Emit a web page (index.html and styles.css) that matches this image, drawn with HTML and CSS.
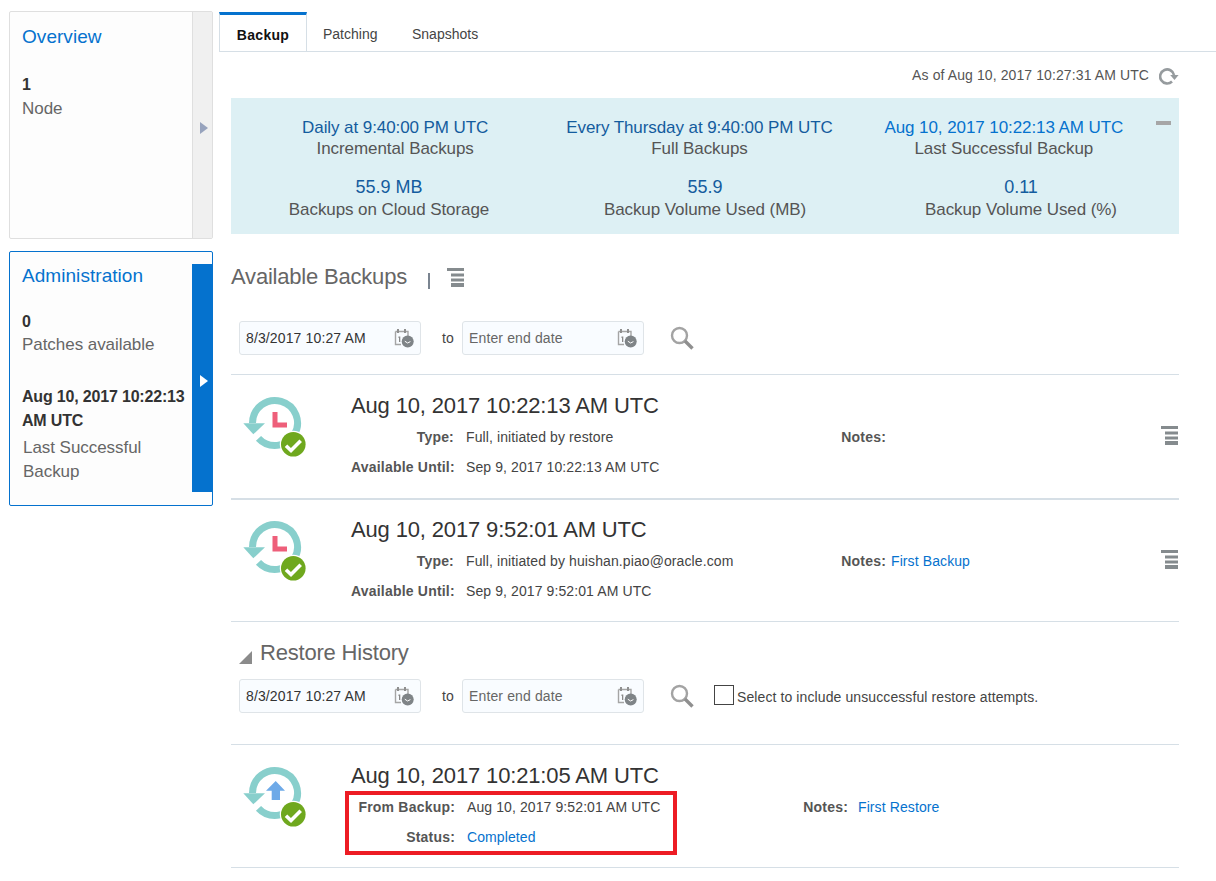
FILE: index.html
```html
<!DOCTYPE html>
<html lang="en">
<head>
<meta charset="utf-8">
<title>Backup</title>
<link rel="stylesheet" href="styles.css">
</head>
<body>
<svg class="defs" width="0" height="0" aria-hidden="true">
  <symbol id="i-base" viewBox="0 0 70 66">
    <path d="M12.5 28A22.5 22.5 0 1 1 18.5 43.3" fill="none" stroke="#88cfcc" stroke-width="7"/>
    <path d="M3.3 28.3H25L13.3 39.3Z" fill="#88cfcc"/>
    <circle cx="53.3" cy="49.3" r="13.5" fill="#fff"/>
    <circle cx="53.3" cy="49.3" r="12.3" fill="#6fa81e"/>
    <path d="M46 50.7L51 55.5 60.7 45.7" fill="none" stroke="#fff" stroke-width="3.6"/>
  </symbol>
  <symbol id="i-cal" viewBox="0 0 20 20">
    <path d="M1.5 3.5H14V8M1.5 3.5V16.5H7" fill="none" stroke="#a5a5a5" stroke-width="1.4"/>
    <path d="M4 1V5M11 1V5" stroke="#8f8f8f" stroke-width="2"/>
    <path d="M4.5 8.5H6.3V14H5V10H4.5Z" fill="#888"/>
    <circle cx="13.7" cy="13.5" r="6" fill="#7f8487"/>
    <path d="M10.8 13.2L13.6 15 16.4 13.6" fill="none" stroke="#fff" stroke-width="1"/>
  </symbol>
  <symbol id="i-search" viewBox="0 0 24 24">
    <circle cx="9.5" cy="9.5" r="7.5" fill="none" stroke="#a3a3a3" stroke-width="2.4"/>
    <path d="M15 15L22.5 22.5" stroke="#8f8f8f" stroke-width="3.4"/>
  </symbol>
  <symbol id="i-stack" viewBox="0 0 17 19">
    <rect x="0" y="0" width="17" height="3" fill="#858b8e"/>
    <rect x="4" y="5.5" width="13" height="3" fill="#858b8e"/>
    <rect x="4" y="10.5" width="13" height="3" fill="#858b8e"/>
    <rect x="4" y="15" width="13" height="4" fill="#858b8e"/>
  </symbol>
</svg>

<div class="page">
  <aside class="sidebar">
    <section class="card card-overview">
      <div class="card-body">
        <h2 class="card-title">Overview</h2>
        <div class="metric-value first">1</div>
        <div class="metric-label">Node</div>
      </div>
      <div class="handle"><span class="arrow"></span></div>
    </section>
    <section class="card card-admin">
      <div class="card-body">
        <h2 class="card-title">Administration</h2>
        <div class="metric-value first-admin">0</div>
        <div class="metric-label">Patches available</div>
        <div class="metric-value second">Aug 10, 2017 10:22:13 AM UTC</div>
        <div class="metric-label last">Last Successful Backup</div>
      </div>
      <div class="handle handle-active"><span class="arrow"></span></div>
    </section>
  </aside>

  <main class="main">
    <nav class="tabs">
      <a class="tab active">Backup</a>
      <a class="tab">Patching</a>
      <a class="tab">Snapshots</a>
    </nav>
    <div class="content">
      <div class="asof">
        <span>As of Aug 10, 2017 10:27:31 AM UTC</span>
        <svg class="refresh" width="20" height="18" viewBox="0 0 20 18"><path d="M13 13.5A7 7 0 1 1 15 7" fill="none" stroke="#969b9e" stroke-width="2.6"/><path d="M11.2 7H19.6L15.5 12Z" fill="#969b9e"/></svg>
      </div>

      <section class="summary">
        <span class="collapse"></span>
        <div class="summary-row row-top">
          <div class="stat"><div class="stat-value">Daily at 9:40:00 PM UTC</div><div class="stat-label">Incremental Backups</div></div>
          <div class="stat"><div class="stat-value">Every Thursday at 9:40:00 PM UTC</div><div class="stat-label">Full Backups</div></div>
          <div class="stat"><div class="stat-value link">Aug 10, 2017 10:22:13 AM UTC</div><div class="stat-label">Last Successful Backup</div></div>
        </div>
        <div class="summary-row row-bottom">
          <div class="stat"><div class="stat-value">55.9 MB</div><div class="stat-label">Backups on Cloud Storage</div></div>
          <div class="stat"><div class="stat-value">55.9</div><div class="stat-label">Backup Volume Used (MB)</div></div>
          <div class="stat"><div class="stat-value">0.11</div><div class="stat-label">Backup Volume Used (%)</div></div>
        </div>
      </section>

      <div class="section-head">
        <h2 class="section-title">Available Backups</h2>
        <span class="sep"></span>
        <svg class="stack-head" width="17" height="19"><use href="#i-stack"/></svg>
      </div>

      <div class="filters filters-backups">
        <div class="date-input"><span class="date-text">8/3/2017 10:27 AM</span><svg width="20" height="20"><use href="#i-cal"/></svg></div>
        <span class="to">to</span>
        <div class="date-input"><span class="date-text placeholder">Enter end date</span><svg width="20" height="20"><use href="#i-cal"/></svg></div>
        <svg class="search" width="24" height="24"><use href="#i-search"/></svg>
      </div>

      <article class="record first-record">
        <svg class="record-icon" width="70" height="66"><use href="#i-base"/><path d="M35 17V30H47" fill="none" stroke="#ee5f7a" stroke-width="5"/></svg>
        <div class="record-main">
          <h3 class="record-title">Aug 10, 2017 10:22:13 AM UTC</h3>
          <div class="details">
            <span class="k">Type:</span><span class="v">Full, initiated by restore</span>
            <span class="k notes">Notes:</span><span class="v"></span>
            <span class="k">Available Until:</span><span class="v">Sep 9, 2017 10:22:13 AM UTC</span>
          </div>
        </div>
        <svg class="record-action" width="17" height="19"><use href="#i-stack"/></svg>
      </article>

      <article class="record">
        <svg class="record-icon" width="70" height="66"><use href="#i-base"/><path d="M35 17V30H47" fill="none" stroke="#ee5f7a" stroke-width="5"/></svg>
        <div class="record-main">
          <h3 class="record-title">Aug 10, 2017 9:52:01 AM UTC</h3>
          <div class="details">
            <span class="k">Type:</span><span class="v">Full, initiated by huishan.piao@oracle.com</span>
            <span class="k notes">Notes:</span><a class="v link">First Backup</a>
            <span class="k">Available Until:</span><span class="v">Sep 9, 2017 9:52:01 AM UTC</span>
          </div>
        </div>
        <svg class="record-action" width="17" height="19"><use href="#i-stack"/></svg>
      </article>

      <div class="restore-head">
        <span class="disclosure"></span>
        <h2 class="section-title">Restore History</h2>
      </div>

      <div class="filters filters-restore">
        <div class="date-input"><span class="date-text">8/3/2017 10:27 AM</span><svg width="20" height="20"><use href="#i-cal"/></svg></div>
        <span class="to">to</span>
        <div class="date-input"><span class="date-text placeholder">Enter end date</span><svg width="20" height="20"><use href="#i-cal"/></svg></div>
        <svg class="search" width="24" height="24"><use href="#i-search"/></svg>
        <span class="checkbox"></span>
        <span class="check-label">Select to include unsuccessful restore attempts.</span>
      </div>

      <article class="record restore-record">
        <svg class="record-icon" width="70" height="66"><use href="#i-base"/><path d="M26 25.7H31.7V35H40V25.7H45L35.7 16Z" fill="#6eaae8"/></svg>
        <div class="record-main">
          <h3 class="record-title">Aug 10, 2017 10:21:05 AM UTC</h3>
          <div class="details details-restore">
            <span class="k">From Backup:</span><span class="v">Aug 10, 2017 9:52:01 AM UTC</span>
            <span class="k notes">Notes:</span><a class="v link">First Restore</a>
            <span class="k">Status:</span><a class="v link">Completed</a>
          </div>
        </div>
        <div class="highlight"></div>
      </article>
    </div>
  </main>
</div>
</body>
</html>
```
FILE: styles.css
```css
* { box-sizing: border-box; }
html, body { margin: 0; padding: 0; background: #fff; }
body { font-family: "Liberation Sans", Arial, sans-serif; color: #333; height: 881px; overflow: hidden; }
.defs { position: absolute; }
h2, h3 { margin: 0; font-weight: normal; }
.page { display: flex; align-items: flex-start; }

.sidebar { width: 204px; margin: 11px 0 0 9px; flex: none; display: flex; flex-direction: column; gap: 12px; }
.card { display: flex; align-items: flex-start; width: 204px; background: #fdfdfd; border: 1px solid #dfdfdf; border-radius: 2px; }
.card-overview { height: 228px; align-items: stretch; }
.card-admin { height: 255px; border-color: #0572ce; }
.card-body { flex: 1; align-self: flex-start; padding-left: 12px; }
.card-title { color: #0572ce; font-size: 19px; line-height: 24px; letter-spacing: 0.05px; }
.card-overview .card-title { margin-top: 13px; }
.card-admin .card-title { margin-top: 12px; }
.metric-value { font-size: 16px; font-weight: bold; line-height: 24px; color: #333; letter-spacing: -0.18px; }
.metric-label { font-size: 17px; line-height: 24px; color: #666; letter-spacing: -0.05px; }
.metric-value.first { margin-top: 24px; }
.metric-value.first-admin { margin-top: 22px; line-height: 23px; }
.metric-value.second { margin-top: 28px; width: 170px; }
.metric-label.last { margin: 3px 0 0 1px; width: 150px; }
.handle { flex: none; width: 20px; background: #f0f0f0; border-left: 1px solid #dfdfdf; display: flex; align-items: center; justify-content: center; }
.handle-active { height: 228px; margin-top: 12px; background: #0572ce; border-left-color: #0572ce; }
.arrow { width: 0; height: 0; margin: 6px 0 0 2px; border-left: 8px solid #97a3bd; border-top: 6px solid transparent; border-bottom: 6px solid transparent; }
.handle-active .arrow { border-left-color: #fff; }

.main { flex: 1; min-width: 0; margin-left: 6px; }
.tabs { display: flex; height: 40px; margin-top: 12px; border-bottom: 1px solid #d6dfe6; font-size: 14px; color: #444; }
.tab { height: 40px; line-height: 44px; padding: 0 17px; }
.tab.active { width: 88px; text-align: center; padding: 0; font-weight: bold; color: #111; letter-spacing: 0.3px; border: 1px solid #d6dfe6; border-top: 3px solid #0572ce; line-height: 40px; background: #fff; }
.tab.active + .tab { padding-left: 16px; padding-right: 17.5px; }

.content { width: 948px; margin-left: 12px; }
.asof { height: 46px; display: flex; align-items: center; justify-content: flex-end; font-size: 14px; letter-spacing: 0.1px; color: #555; }
.refresh { margin-left: 10px; margin-top: 4px; }

.summary { position: relative; height: 136px; background: #ddf0f4; padding-top: 19px; font-size: 17px; letter-spacing: -0.08px; }
.collapse { position: absolute; left: 925px; top: 23px; width: 15px; height: 4px; background: #a6a6a6; }
.summary-row { display: grid; grid-template-columns: repeat(3, 1fr); text-align: center; }
.row-top { padding: 0 23px 0 12px; }
.row-bottom { margin-top: 18px; }
.row-bottom .stat-value { font-size: 18px; letter-spacing: 0; }
.row-bottom .stat-label { margin-top: 1px; }
.stat-value { line-height: 21px; color: #145c9e; }
.stat-value.link { color: #0572ce; }
.stat-label { line-height: 21px; color: #555; }

.section-head { display: flex; align-items: center; height: 30px; margin-top: 28px; }
.section-title { font-size: 22px; line-height: 30px; color: #666; letter-spacing: -0.2px; }
.sep { width: 2px; height: 16px; background: #7a8490; margin: 8px 0 0 21px; }
.stack-head { margin-left: 17px; }

.filters { display: flex; align-items: center; padding-left: 8px; }
.filters-backups { height: 34px; margin-top: 29px; }
.filters-restore { height: 34px; margin-top: 12px; }
.date-input { width: 182px; height: 34px; display: flex; align-items: center; justify-content: space-between; padding: 0 6px; background: #f9fcff; border: 1px solid #dfe4e8; border-radius: 3px; font-size: 14px; letter-spacing: 0.13px; color: #333; }
.date-text { line-height: 20px; }
.placeholder { color: #666; }
.to { width: 41px; padding-left: 21px; font-size: 14px; color: #444; }
.search { margin-left: 26px; }
.checkbox { width: 20px; height: 20px; margin: -3px 0 0 20px; border: 1px solid #444; background: #fff; }
.check-label { margin: 2px 0 0 3px; font-size: 14px; letter-spacing: 0.1px; color: #444; }

.record { position: relative; display: flex; align-items: flex-start; padding: 0 1px 0 9px; border-top: 1px solid #d6dfe6; height: 123px; }
.first-record { margin-top: 19px; height: 124px; }
.record + .record { border-top: 2px solid #d6dfe6; height: 123px; }
.record + .record .record-icon { margin-top: 19px; }
.record + .record .record-main { padding-top: 17px; }
.record + .record .record-action { margin-top: 50px; }
.record-icon { flex: none; margin-top: 20px; }
.record-main { margin-left: 41px; flex: 1; padding-top: 18px; }
.record-title { font-size: 22px; line-height: 26px; color: #333; letter-spacing: -0.15px; }
.details { display: grid; grid-template-columns: 115px 375px 50px 1fr; grid-auto-rows: 30px; align-items: center; margin-top: 3px; font-size: 14px; letter-spacing: 0.1px; }
.k { font-weight: bold; color: #555; text-align: right; padding-right: 12px; white-space: nowrap; font-size: 14px; letter-spacing: 0.2px; }
.k.notes { padding-right: 5px; }
.v { color: #444; white-space: nowrap; }
.link { color: #0572ce; }
.details-restore { grid-template-columns: 116px 336px 55px 1fr; }
.details-restore .k.notes { padding-right: 10px; }
.record-action { flex: none; margin-top: 51px; }

.restore-head { display: flex; align-items: center; height: 46px; padding: 16px 0 0 8px; border-top: 1px solid #d6dfe6; }
.disclosure { width: 0; height: 0; border-left: 13px solid transparent; border-bottom: 13px solid #8b8b8b; margin-top: 10px; }
.restore-head .section-title { margin-left: 8px; }

.restore-record { margin-top: 31px; height: 124px; border-bottom: 1px solid #d6dfe6; }
.highlight { position: absolute; left: 114px; top: 46px; width: 332px; height: 64px; border: 4px solid #ed1c24; }
```
